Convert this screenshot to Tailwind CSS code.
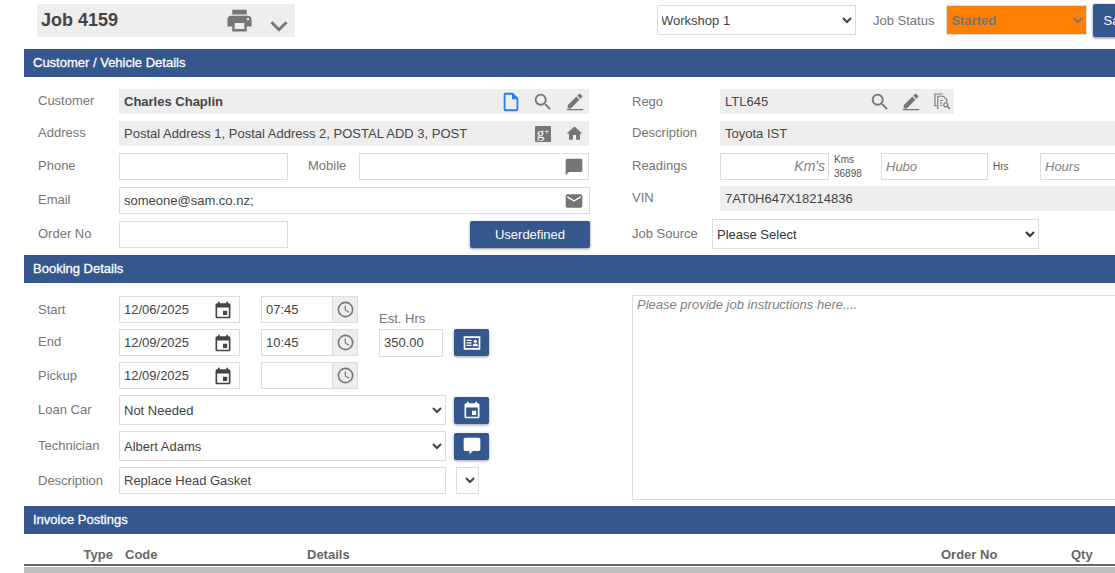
<!DOCTYPE html>
<html lang="en">
<head>
    <meta charset="UTF-8">
    <title>Job 4159</title>
    <script src="https://cdn.jsdelivr.net/npm/@tailwindcss/browser@4"></script>
</head>
<body class="bg-white font-['Liberation_Sans',Arial,sans-serif] text-[13px] text-[#444] overflow-hidden h-[573px]">
    <!-- top bar -->
    <div class="flex items-start h-[49px] pt-[4px] pl-[37px] w-[1200px]">
        <div class="flex items-center w-[258px] h-[33px] bg-[#eee] pl-[4px]">
            <span class="text-[18px] font-bold text-[#444] w-[184px] shrink-0">Job 4159</span>
            <svg class="w-[29px] h-[29px] shrink-0 text-[#757575]" viewBox="0 0 24 24" fill="currentColor"><path d="M19 8H5c-1.66 0-3 1.34-3 3v6h4v4h12v-4h4v-6c0-1.66-1.34-3-3-3zm-3 11H8v-5h8v5zm3-7c-.55 0-1-.45-1-1s.45-1 1-1 1 .45 1 1-.45 1-1 1zm-1-9H6v4h12V3z"/></svg>
            <svg class="w-[34px] h-[34px] shrink-0 ml-[8px] mt-[11px] text-[#757575]" viewBox="0 0 24 24" fill="currentColor"><path d="M7.41 8.59 12 13.17l4.59-4.58L18 10l-6 6-6-6z"/></svg>
        </div>
        <select class="ml-[362px] mt-[1px] w-[199px] h-[30px] border border-[#ddd] bg-white px-0 indent-[-1px] text-[#444]"><option>Workshop 1</option></select>
        <span class="ml-[17px] mt-[7px] text-[#757575]">Job Status</span>
        <select class="ml-[12px] mt-[1px] w-[141px] h-[30px] border border-[#ddd] bg-[#ff8000] px-0 font-bold text-[#757575]"><option>Started</option></select>
        <button class="ml-[6px] w-[50px] h-[33px] rounded-[2px] bg-[#34578e] text-white shadow-[0_1px_3px_rgba(0,0,0,0.5)]">Save</button>
    </div>

    <div class="ml-[24px] w-[1200px]">
        <div class="h-[28px] bg-[#34578e] text-white [-webkit-text-stroke:0.3px_white] leading-[27px] px-[9px]">Customer / Vehicle Details</div>

        <div class="flex h-[178px] pt-[12px]">
            <!-- customer -->
            <div class="w-[566px] pl-[14px] shrink-0">
                <div class="flex items-center h-[25px] mb-[7px]">
                    <span class="w-[81px] text-[#757575] -mt-[2px]">Customer</span>
                    <div class="flex items-center w-[470px] h-[25px] bg-[#eee] pl-[5px] font-bold">
                        <span class="w-[376px]">Charles Chaplin</span>
                        <svg class="w-[22px] h-[22px] text-[#2b7de9]" viewBox="0 0 24 24" fill="currentColor"><path d="M14 2H6c-1.1 0-2 .9-2 2v16c0 1.1.9 2 2 2h12c1.1 0 2-.9 2-2V8l-6-6zM6 20V4h7v5h5v11H6z"/></svg>
                        <svg class="w-[22px] h-[22px] ml-[10px] text-[#757575]" viewBox="0 0 24 24" fill="currentColor"><path d="M15.5 14h-.79l-.28-.27A6.47 6.47 0 0 0 16 9.5 6.5 6.5 0 1 0 9.5 16c1.61 0 3.09-.59 4.23-1.57l.27.28v.79l5 4.99L20.49 19l-4.99-5zm-6 0C7.01 14 5 11.99 5 9.5S7.01 5 9.5 5 14 7.01 14 9.5 11.99 14 9.5 14z"/></svg>
                        <svg class="w-[22px] h-[22px] ml-[10px] text-[#757575]" viewBox="0 0 24 24" fill="currentColor"><path d="M3 21h18v-1.500H3V21zM17.700 3.300a1 1 0 0 0-1.400 0L14.500 5.100l3.400 3.400 1.800-1.800a1 1 0 0 0 0-1.400l-2-2zM13.500 6.100 4 15.600V19h3.400l9.500-9.500-3.400-3.400z"/></svg>
                    </div>
                </div>
                <div class="flex items-center h-[25px] mb-[7px]">
                    <span class="w-[81px] text-[#757575] -mt-[2px]">Address</span>
                    <div class="flex items-center w-[470px] h-[25px] bg-[#eee] pl-[5px]">
                        <span class="w-[411px] whitespace-nowrap overflow-hidden">Postal Address 1, Postal Address 2, POSTAL ADD 3, POST</span>
                        <div class="flex items-center justify-center w-[16px] h-[16px] bg-[#757575] rounded-[1px] text-white text-[15px] leading-none font-['Liberation_Serif',serif]">g<span class="text-[9px] -mt-[5px]">+</span></div>
                        <svg class="w-[19px] h-[19px] ml-[14px] text-[#757575]" viewBox="0 0 24 24" fill="currentColor"><path d="M10 20v-6h4v6h5v-8h3L12 3 2 12h3v8z"/></svg>
                    </div>
                </div>
                <div class="flex items-center h-[27px] mb-[7px]">
                    <span class="w-[81px] text-[#757575] -mt-[2px]">Phone</span>
                    <input class="w-[169px] h-[27px] border border-[#ddd] px-[4px]">
                    <span class="w-[71px] pl-[20px] text-[#757575] -mt-[2px]">Mobile</span>
                    <div class="flex items-center justify-end w-[230px] h-[27px] border border-[#ddd] pr-[4px]">
                        <svg class="w-[20px] h-[20px] text-[#757575]" viewBox="0 0 24 24" fill="currentColor"><path d="M20 2H4c-1.1 0-2 .9-2 2v18l4-4h14c1.100 0 2-.9 2-2V4c0-1.100-.9-2-2-2z"/></svg>
                    </div>
                </div>
                <div class="flex items-center h-[27px] mb-[7px]">
                    <span class="w-[81px] text-[#757575] -mt-[2px]">Email</span>
                    <div class="flex items-center justify-between w-[471px] h-[27px] border border-[#ddd] pl-[4px] pr-[5px]">
                        <span>someone@sam.co.nz;</span>
                        <svg class="w-[20px] h-[20px] text-[#757575]" viewBox="0 0 24 24" fill="currentColor"><path d="M20 4H4c-1.1 0-2 .9-2 2v12c0 1.1.9 2 2 2h16c1.1 0 2-.9 2-2V6c0-1.1-.9-2-2-2zm0 4-8 5-8-5V6l8 5 8-5v2z"/></svg>
                    </div>
                </div>
                <div class="flex items-center h-[27px]">
                    <span class="w-[81px] text-[#757575] -mt-[2px]">Order No</span>
                    <input class="w-[169px] h-[27px] border border-[#ddd] px-[4px]">
                    <button class="ml-[182px] w-[120px] h-[27px] rounded-[2px] bg-[#34578e] text-white shadow-[0_1px_3px_rgba(0,0,0,0.4)]">Userdefined</button>
                </div>
            </div>
            <!-- vehicle -->
            <div class="pl-[42px]">
                <div class="flex items-center h-[25px] mb-[7px]">
                    <span class="w-[88px] text-[#757575]">Rego</span>
                    <div class="flex items-center w-[234px] h-[25px] bg-[#eee] pl-[5px]">
                        <span class="w-[144px]">LTL645</span>
                        <svg class="w-[22px] h-[22px] text-[#757575]" viewBox="0 0 24 24" fill="currentColor"><path d="M15.5 14h-.79l-.28-.27A6.47 6.47 0 0 0 16 9.5 6.5 6.5 0 1 0 9.5 16c1.61 0 3.09-.59 4.23-1.57l.27.28v.79l5 4.99L20.49 19l-4.99-5zm-6 0C7.01 14 5 11.99 5 9.5S7.01 5 9.5 5 14 7.01 14 9.5 11.99 14 9.5 14z"/></svg>
                        <svg class="w-[22px] h-[22px] ml-[9px] text-[#757575]" viewBox="0 0 24 24" fill="currentColor"><path d="M3 21h18v-1.500H3V21zM17.700 3.300a1 1 0 0 0-1.400 0L14.500 5.100l3.400 3.400 1.800-1.800a1 1 0 0 0 0-1.400l-2-2zM13.500 6.100 4 15.600V19h3.400l9.500-9.500-3.400-3.400z"/></svg>
                        <svg class="w-[17px] h-[17px] ml-[12px] text-[#757575]" viewBox="0 0 18 18" fill="none" stroke="currentColor" stroke-width="1.2"><path d="M3 13.500H1V1h8"/><path d="M4 17V3.500h6l3.500 3.500v2.500"/><path d="M6.500 8h3M6.500 10.500h2M6.500 13h2"/><circle cx="12.500" cy="12.500" r="2.200"/><path d="m14 14 3 3" stroke-width="1.700"/></svg>
                    </div>
                </div>
                <div class="flex items-center h-[25px] mb-[7px]">
                    <span class="w-[88px] text-[#757575] -mt-[2px]">Description</span>
                    <div class="flex items-center w-[480px] h-[25px] bg-[#eee] pl-[5px]">Toyota IST</div>
                </div>
                <div class="flex items-center h-[27px] mb-[6px]">
                    <span class="w-[88px] text-[#757575] -mt-[2px]">Readings</span>
                    <input class="w-[109px] h-[27px] border border-[#ddd] pl-[4px] pr-[3px] text-right italic placeholder:text-[#808080] text-[14px] -mt-[1px]" placeholder="Km's">
                    <span class="w-[52px] pl-[5px] text-[10px] leading-[14px] text-[#555]">Kms<br>36898</span>
                    <input class="w-[107px] h-[27px] border border-[#ddd] px-[4px] italic placeholder:text-[#808080]" placeholder="Hubo">
                    <span class="w-[52px] pl-[5px] text-[10px] text-[#555]">Hrs</span>
                    <input class="w-[107px] h-[27px] border border-[#ddd] px-[4px] italic placeholder:text-[#808080]" placeholder="Hours">
                </div>
                <div class="flex items-center h-[25px] mb-[8px]">
                    <span class="w-[88px] text-[#757575] -mt-[2px]">VIN</span>
                    <div class="flex items-center w-[480px] h-[25px] bg-[#eee] pl-[5px]">7AT0H647X18214836</div>
                </div>
                <div class="flex items-center h-[30px]">
                    <span class="w-[80px] text-[#757575] -mt-[1px]">Job Source</span>
                    <select class="w-[327px] h-[30px] border border-[#ddd] bg-white px-0 text-[#333]"><option>Please Select</option></select>
                </div>
            </div>
        </div>

        <div class="h-[28px] bg-[#34578e] text-white [-webkit-text-stroke:0.3px_white] leading-[27px] px-[9px]">Booking Details</div>

        <div class="flex h-[223px] pt-[13px]">
            <div class="w-[566px] pl-[14px] shrink-0">
                <div class="flex items-center h-[27px] mb-[6px]">
                    <span class="w-[81px] text-[#757575]">Start</span>
                    <div class="flex items-center justify-between w-[121px] h-[27px] border border-[#ddd] pl-[4px] pr-[6px]">
                        <span>12/06/2025</span>
                        <svg class="w-[20px] h-[20px] text-[#444]" viewBox="0 0 24 24" fill="currentColor"><path d="M19 4h-1V2h-2v2H8V2H6v2H5c-1.1 0-2 .9-2 2v14c0 1.1.9 2 2 2h14c1.1 0 2-.9 2-2V6c0-1.1-.9-2-2-2zm0 16H5V9h14v11zm-7-7v5h5v-5h-5z"/></svg>
                    </div>
                    <div class="flex ml-[21px] h-[27px] w-[97px] border border-[#ddd]">
                        <span class="flex items-center w-[70px] pl-[4px] text-[#444]">07:45</span>
                        <div class="flex items-center justify-center flex-1 bg-[#eee] border-l border-[#ddd]">
                            <svg class="w-[19px] h-[19px] text-[#757575]" viewBox="0 0 24 24" fill="currentColor"><path d="M12 2a10 10 0 1 0 0 20 10 10 0 0 0 0-20zm0 18a8 8 0 1 1 0-16 8 8 0 0 1 0 16zm.5-13H11v6l5.2 3.100.8-1.300-4.500-2.600V7z"/></svg>
                        </div>
                    </div>
                </div>
                <div class="flex items-center h-[27px] mb-[6px]">
                    <span class="w-[81px] text-[#757575] -mt-[2px]">End</span>
                    <div class="flex items-center justify-between w-[121px] h-[27px] border border-[#ddd] pl-[4px] pr-[6px]">
                        <span>12/09/2025</span>
                        <svg class="w-[20px] h-[20px] text-[#444]" viewBox="0 0 24 24" fill="currentColor"><path d="M19 4h-1V2h-2v2H8V2H6v2H5c-1.1 0-2 .9-2 2v14c0 1.1.9 2 2 2h14c1.1 0 2-.9 2-2V6c0-1.1-.9-2-2-2zm0 16H5V9h14v11zm-7-7v5h5v-5h-5z"/></svg>
                    </div>
                    <div class="flex ml-[21px] h-[27px] w-[97px] border border-[#ddd]">
                        <span class="flex items-center w-[70px] pl-[4px] text-[#444]">10:45</span>
                        <div class="flex items-center justify-center flex-1 bg-[#eee] border-l border-[#ddd]">
                            <svg class="w-[19px] h-[19px] text-[#757575]" viewBox="0 0 24 24" fill="currentColor"><path d="M12 2a10 10 0 1 0 0 20 10 10 0 0 0 0-20zm0 18a8 8 0 1 1 0-16 8 8 0 0 1 0 16zm.5-13H11v6l5.2 3.100.8-1.300-4.500-2.600V7z"/></svg>
                        </div>
                    </div>
                    <div class="relative ml-[21px] w-[64px] h-[28px] border border-[#ddd] flex items-center pl-[4px]">
                        350.00
                        <span class="absolute left-[-1px] bottom-[28px] leading-[19px] text-[#757575] whitespace-nowrap">Est. Hrs</span>
                    </div>
                    <button class="flex items-center justify-center ml-[11px] w-[35px] h-[27px] rounded-[2px] bg-[#34578e] shadow-[0_1px_3px_rgba(0,0,0,0.4)]">
                        <svg class="w-[20px] h-[20px] text-white" viewBox="0 0 24 24" fill="currentColor"><path d="M2 4h20v16H2V4zm2 2v12h16V6H4zm1.500 2h6v1.500h-6V8zm0 3h6v1.500h-6V11zm0 3h6v1.500h-6V14zM16 8a2 2 0 1 1 0 4 2 2 0 0 1 0-4zm-3 8v-1.500c0-1 2-2 3-2s3 1 3 2V16h-6z"/></svg>
                    </button>
                </div>
                <div class="flex items-center h-[27px] mb-[6px]">
                    <span class="w-[81px] text-[#757575]">Pickup</span>
                    <div class="flex items-center justify-between w-[121px] h-[27px] border border-[#ddd] pl-[4px] pr-[6px]">
                        <span>12/09/2025</span>
                        <svg class="w-[20px] h-[20px] text-[#444]" viewBox="0 0 24 24" fill="currentColor"><path d="M19 4h-1V2h-2v2H8V2H6v2H5c-1.1 0-2 .9-2 2v14c0 1.1.9 2 2 2h14c1.1 0 2-.9 2-2V6c0-1.1-.9-2-2-2zm0 16H5V9h14v11zm-7-7v5h5v-5h-5z"/></svg>
                    </div>
                    <div class="flex ml-[21px] h-[27px] w-[97px] border border-[#ddd]">
                        <span class="w-[70px]"></span>
                        <div class="flex items-center justify-center flex-1 bg-[#eee] border-l border-[#ddd]">
                            <svg class="w-[19px] h-[19px] text-[#757575]" viewBox="0 0 24 24" fill="currentColor"><path d="M12 2a10 10 0 1 0 0 20 10 10 0 0 0 0-20zm0 18a8 8 0 1 1 0-16 8 8 0 0 1 0 16zm.5-13H11v6l5.2 3.100.8-1.300-4.500-2.600V7z"/></svg>
                        </div>
                    </div>
                </div>
                <div class="flex items-center h-[30px] mb-[6px]">
                    <span class="w-[81px] text-[#757575] -mt-[1px]">Loan Car</span>
                    <select class="w-[327px] h-[30px] border border-[#ddd] bg-white px-0 text-[#444]"><option>Not Needed</option></select>
                    <button class="flex items-center justify-center ml-[8px] w-[35px] h-[27px] rounded-[2px] bg-[#34578e] shadow-[0_1px_3px_rgba(0,0,0,0.4)]">
                        <svg class="w-[20px] h-[20px] text-white" viewBox="0 0 24 24" fill="currentColor"><path d="M19 4h-1V2h-2v2H8V2H6v2H5c-1.1 0-2 .9-2 2v14c0 1.1.9 2 2 2h14c1.1 0 2-.9 2-2V6c0-1.1-.9-2-2-2zm0 16H5V9h14v11zm-7-7v5h5v-5h-5z"/></svg>
                    </button>
                </div>
                <div class="flex items-center h-[30px] mb-[6px]">
                    <span class="w-[81px] text-[#757575] -mt-[1px]">Technician</span>
                    <select class="w-[327px] h-[30px] border border-[#ddd] bg-white px-0 text-[#444]"><option>Albert Adams</option></select>
                    <button class="flex items-center justify-center ml-[8px] w-[35px] h-[27px] rounded-[2px] bg-[#34578e] shadow-[0_1px_3px_rgba(0,0,0,0.4)]">
                        <svg class="w-[20px] h-[20px] text-white" viewBox="0 0 24 24" fill="currentColor"><path d="M20 2H4c-1.100 0-2 .9-2 2v12c0 1.100.9 2 2 2h5v4l4-4h7c1.100 0 2-.9 2-2V4c0-1.100-.9-2-2-2z"/></svg>
                    </button>
                </div>
                <div class="flex items-center h-[27px]">
                    <span class="w-[81px] text-[#757575]">Description</span>
                    <div class="flex items-center w-[327px] h-[27px] border border-[#ddd] pl-[4px]">Replace Head Gasket</div>
                    <select class="ml-[10px] w-[23px] h-[27px] border border-[#ddd] bg-white"></select>
                </div>
            </div>
            <div class="pl-[42px] -mt-[1px]">
                <textarea class="block w-[500px] h-[205px] border border-[#ddd] px-[4px] py-0 leading-[17px] italic placeholder:text-[#808080]" placeholder="Please provide job instructions here...."></textarea>
            </div>
        </div>

        <div class="h-[28px] bg-[#34578e] text-white [-webkit-text-stroke:0.3px_white] leading-[27px] px-[9px]">Invoice Postings</div>

        <!-- postings header -->
        <div class="flex items-center h-[32px] pt-[11px] border-b-[2px] border-[#666] font-bold text-[#666]">
            <span class="w-[89px] text-right">Type</span>
            <span class="ml-[12px] w-[182px]">Code</span>
            <span class="w-[634px]">Details</span>
            <span class="w-[130px]">Order No</span>
            <span>Qty</span>
        </div>
        <div class="mt-[1px] h-[10px] bg-[#bdbdbd]"></div>
    </div>
</body>
</html>
